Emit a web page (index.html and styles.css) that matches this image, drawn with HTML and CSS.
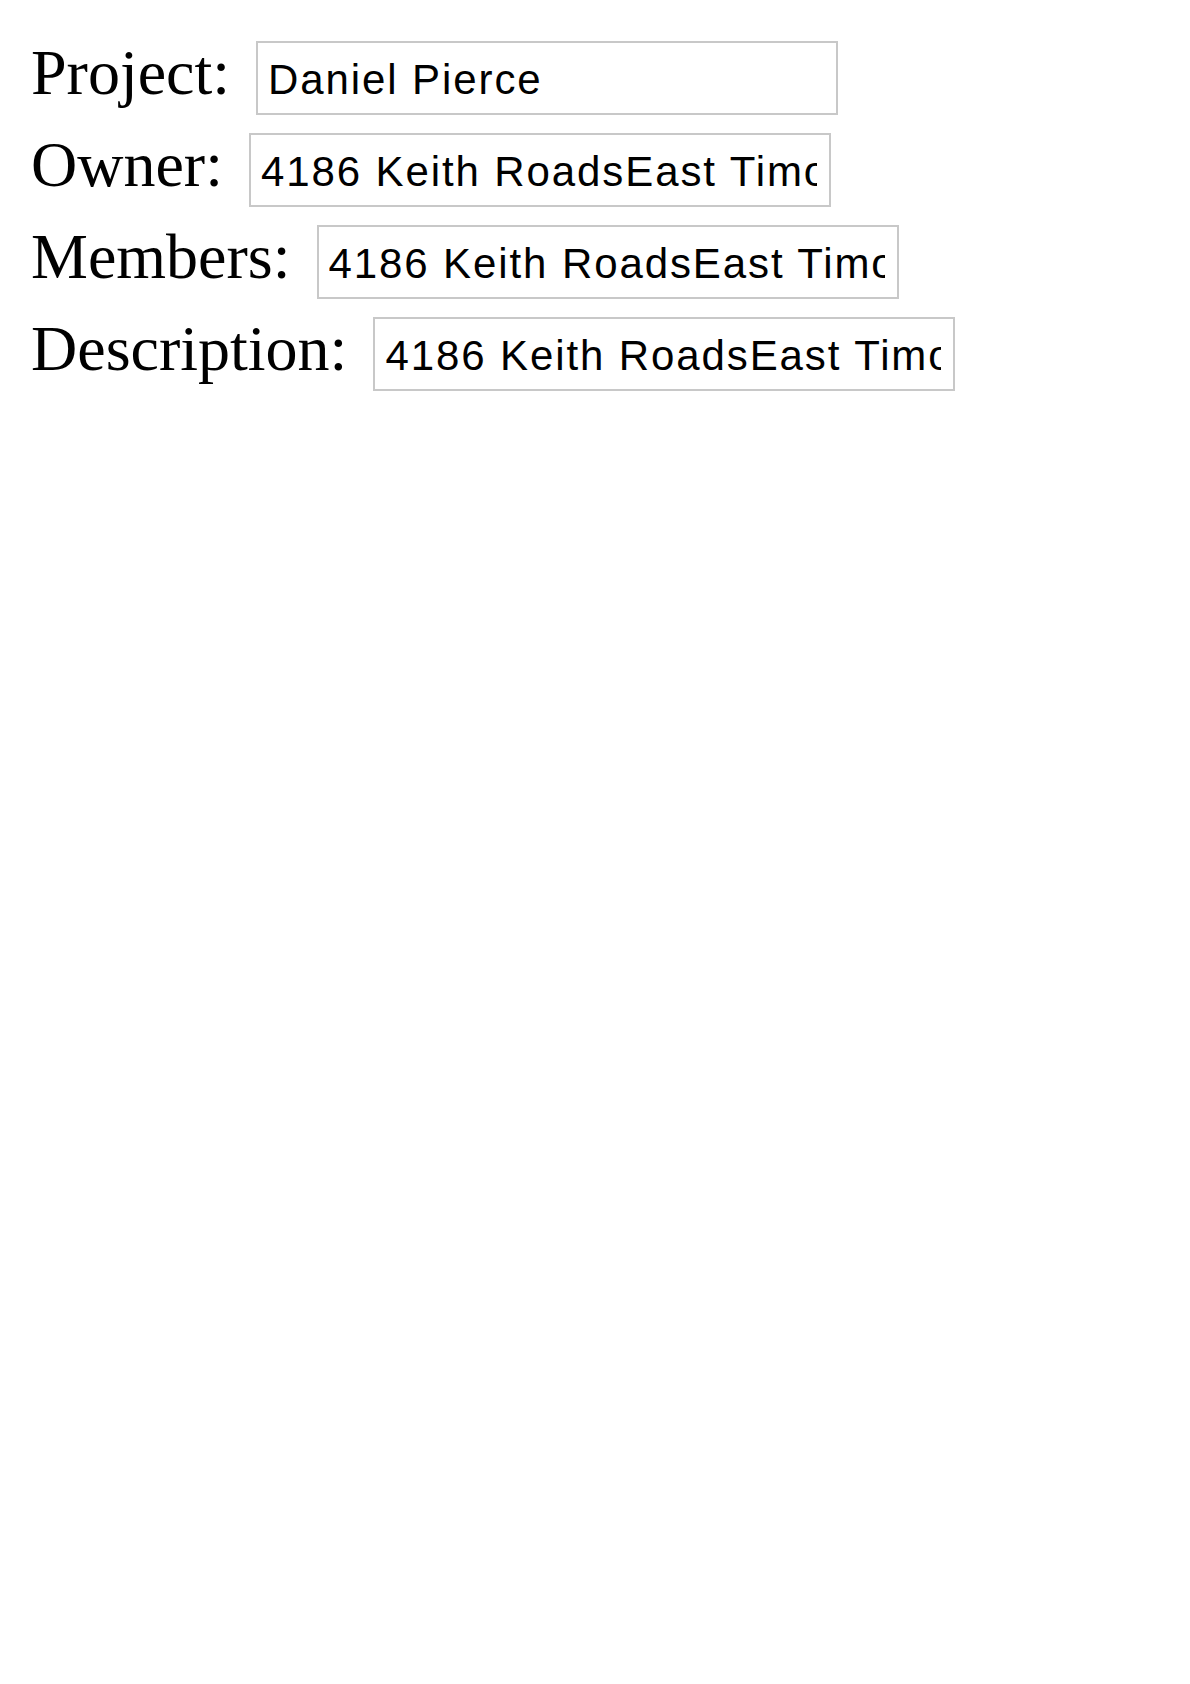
FILE: index.html
```html
<!DOCTYPE html>
<html>
<head>
<meta charset="utf-8">
<title>Project</title>
<link rel="stylesheet" href="styles.css">
</head>
<body>
<form class="project-form">
  <div class="field">
    <label class="field-label" for="project">Project:</label>
    <input class="field-input" id="project" type="text" value="Daniel Pierce">
  </div>
  <div class="field">
    <label class="field-label" for="owner">Owner:</label>
    <input class="field-input" id="owner" type="text" value="4186 Keith RoadsEast Timothy">
  </div>
  <div class="field">
    <label class="field-label" for="members">Members:</label>
    <input class="field-input" id="members" type="text" value="4186 Keith RoadsEast Timothy">
  </div>
  <div class="field">
    <label class="field-label" for="description">Description:</label>
    <input class="field-input" id="description" type="text" value="4186 Keith RoadsEast Timothy">
  </div>
</form>
</body>
</html>
```

FILE: styles.css
```css
html, body {
  margin: 0;
  padding: 0;
  background: #ffffff;
}

.project-form {
  display: flex;
  flex-direction: column;
  gap: 18px;
  padding: 41px 0 0 31px;
}

.field {
  display: flex;
  align-items: baseline;
  gap: 26px;
}

.field-label {
  font-family: "Liberation Serif", "Times New Roman", serif;
  font-size: 64px;
  line-height: 1;
  color: #000;
}

.field-input {
  box-sizing: border-box;
  width: 582px;
  height: 74px;
  margin: 0;
  padding: 4px 12px 0 10px;
  border: 2px solid #c8c8c8;
  border-radius: 0;
  background: #fff;
  font-family: "Liberation Sans", Arial, sans-serif;
  font-size: 42px;
  letter-spacing: 1.9px;
  color: #000;
  outline: none;
}
```
